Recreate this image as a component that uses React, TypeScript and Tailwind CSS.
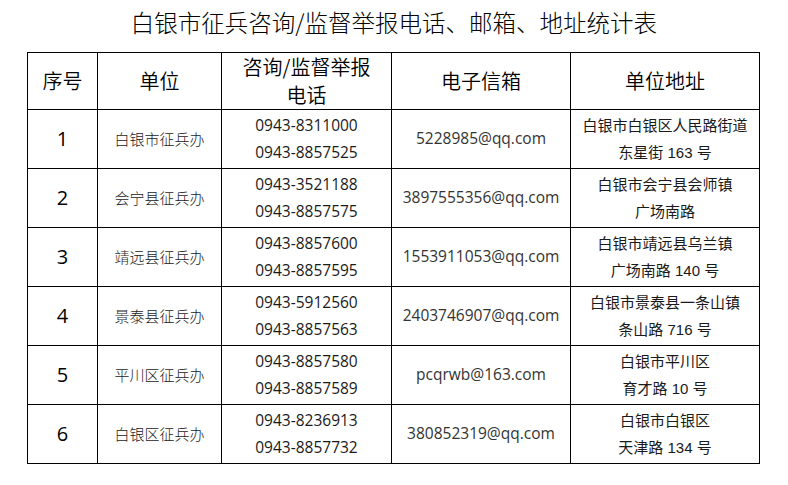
const rows = [
  { no: "1", unit: "白银市征兵办", phones: ["0943-8311000", "0943-8857525"], email: "5228985@qq.com", addr: ["白银市白银区人民路街道", "东星街 163 号"] },
  { no: "2", unit: "会宁县征兵办", phones: ["0943-3521188", "0943-8857575"], email: "3897555356@qq.com", addr: ["白银市会宁县会师镇", "广场南路"] },
  { no: "3", unit: "靖远县征兵办", phones: ["0943-8857600", "0943-8857595"], email: "1553911053@qq.com", addr: ["白银市靖远县乌兰镇", "广场南路 140 号"] },
  { no: "4", unit: "景泰县征兵办", phones: ["0943-5912560", "0943-8857563"], email: "2403746907@qq.com", addr: ["白银市景泰县一条山镇", "条山路 716 号"] },
  { no: "5", unit: "平川区征兵办", phones: ["0943-8857580", "0943-8857589"], email: "pcqrwb@163.com", addr: ["白银市平川区", "育才路 10 号"] },
  { no: "6", unit: "白银区征兵办", phones: ["0943-8236913", "0943-8857732"], email: "380852319@qq.com", addr: ["白银市白银区", "天津路 134 号"] },
];

const cjk = "font-['Noto_Sans_CJK_SC',sans-serif]";
const latin = "font-['Open_Sans','Noto_Sans_CJK_SC',sans-serif]";
const addrFont = "font-['Liberation_Sans','Noto_Sans_CJK_SC',sans-serif]";

export default function App() {
  return (
    <div className={`w-[788px] h-[485px] bg-white text-[#1a1a1a] ${cjk}`}>
      <h1 className="pt-[5px] h-[52px] text-center text-[23.5px] leading-[34px] font-light text-black">
        白银市征兵咨询/监督举报电话、邮箱、地址统计表
      </h1>

      <table className="ml-[27px] border-collapse table-fixed w-[732px]">
        <colgroup>
          <col className="w-[70px]" />
          <col className="w-[124px]" />
          <col className="w-[170px]" />
          <col className="w-[179px]" />
          <col className="w-[189px]" />
        </colgroup>
        <thead>
          <tr className="h-[55px] text-[20px] text-black">
            <th className="border border-black font-[350]">序号</th>
            <th className="border border-black font-[350]">单位</th>
            <th className="border border-black font-[350] leading-[28px]">
              咨询/监督举报
              <br />
              电话
            </th>
            <th className="border border-black font-[350]">电子信箱</th>
            <th className="border border-black font-[350]">单位地址</th>
          </tr>
        </thead>
        <tbody>
          {rows.map((r) => (
            <tr key={r.no} className="h-[59px]">
              <td className={`border border-black text-center text-[20px] text-black ${latin}`}>{r.no}</td>
              <td className="border border-black text-center text-[15px] font-light">{r.unit}</td>
              <td className={`border border-black text-center text-[15.5px] leading-[27px] ${latin}`}>
                <div>{r.phones[0]}</div>
                <div>{r.phones[1]}</div>
              </td>
              <td className={`border border-black text-center text-[15.5px] text-[#333] ${latin}`}>{r.email}</td>
              <td className={`border border-black text-center text-[15px] leading-[27px] ${addrFont}`}>
                <div>{r.addr[0]}</div>
                <div>{r.addr[1]}</div>
              </td>
            </tr>
          ))}
        </tbody>
      </table>
    </div>
  );
}
